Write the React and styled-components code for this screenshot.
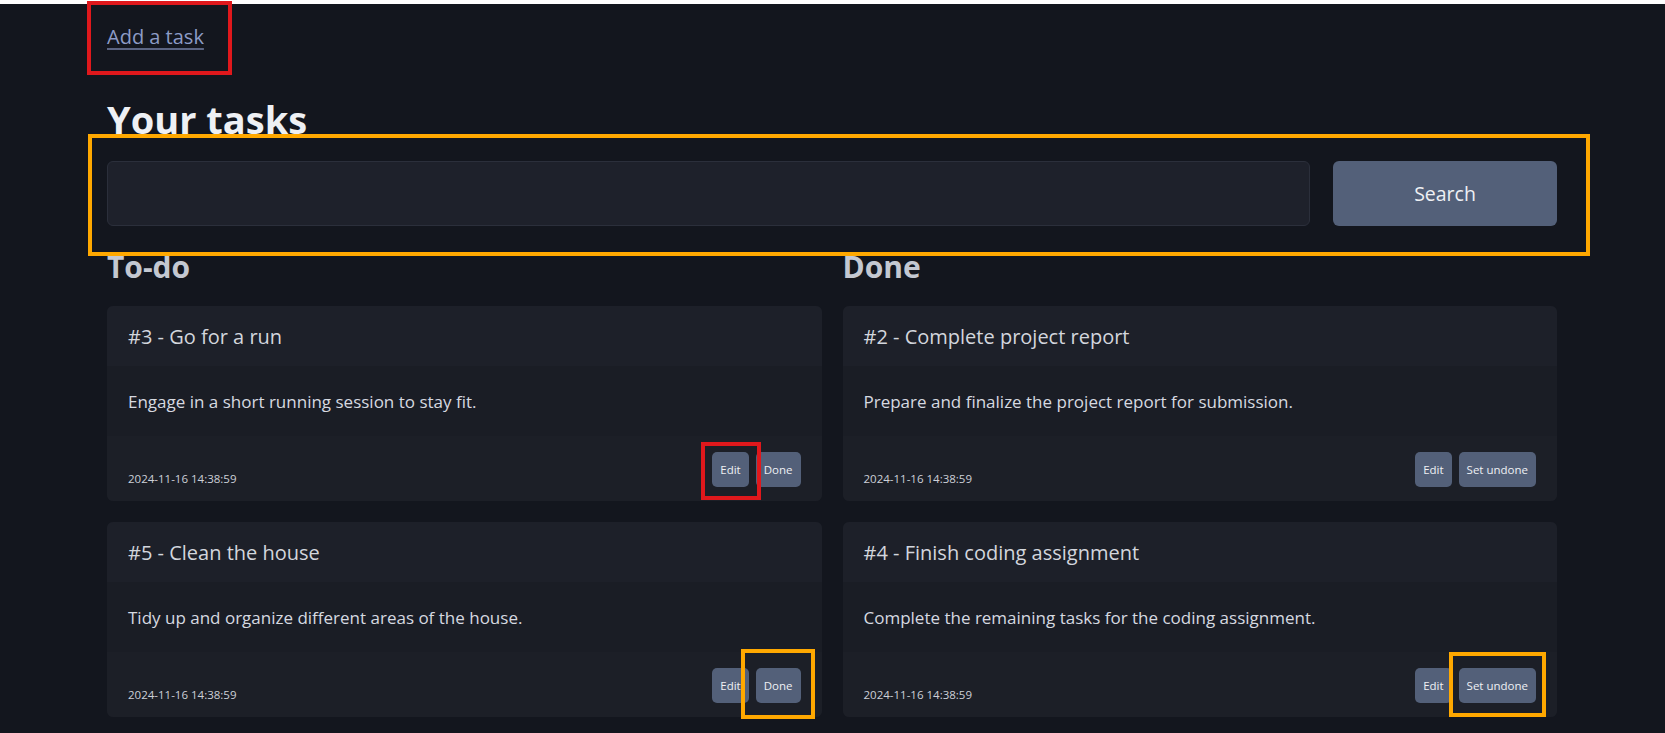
import React, { useState } from 'react';
import styled, { createGlobalStyle } from 'styled-components';

const GlobalStyle = createGlobalStyle`
    html, body {
        margin: 0;
        padding: 0;
        background-color: #13161e;
    }
    body {
        font-family: 'Open Sans', 'Noto Sans', sans-serif;
        color: #d3d6dd;
    }
`;

const Page = styled.div`
    position: relative;
    min-height: 729px;
    border-top: 4px solid #ffffff;
    padding: 0 108px 0 107px;
`;

// annotation rectangles drawn over the screenshot
const Marker = styled.div`
    position: absolute;
    top: ${(props) => props.top}px;
    left: ${(props) => props.left}px;
    width: ${(props) => props.width}px;
    height: ${(props) => props.height}px;
    border: 4px solid ${(props) => props.color};
    box-sizing: border-box;
    pointer-events: none;
`;

const AddLink = styled.a`
    display: inline-block;
    margin-top: 20px;
    font-size: 20px;
    line-height: 26px;
    color: #8d9cc6;
    text-decoration: underline;
    text-decoration-color: #5b6482;
    text-underline-offset: 4px;
    cursor: pointer;
`;

const Title = styled.h1`
    margin: 46px 0 0;
    font-size: 38px;
    line-height: 46px;
    font-weight: 700;
    color: #eef0f4;
`;

const SearchRow = styled.form`
    display: flex;
    gap: 23px;
    margin-top: 19px;
`;

const SearchInput = styled.input`
    flex: 1;
    height: 65px;
    box-sizing: border-box;
    background-color: #1e212b;
    border: 1px solid #2b2f3b;
    border-radius: 6px;
    color: #e0e3ea;
    font-family: inherit;
    font-size: 18px;
    padding: 0 16px;
    outline: none;
`;

const SearchButton = styled.button`
    width: 224px;
    height: 65px;
    border: none;
    border-radius: 6px;
    background-color: #536079;
    color: #eef0f4;
    font-family: inherit;
    font-size: 19.5px;
    cursor: pointer;
`;

const Columns = styled.div`
    display: grid;
    grid-template-columns: 1fr 1fr;
    column-gap: 21px;
    margin-top: 23px;
`;

const Column = styled.section`
    display: flex;
    flex-direction: column;
    gap: 21px;
`;

const ColumnTitle = styled.h2`
    margin: 0;
    font-size: 30px;
    line-height: 36px;
    font-weight: 700;
    color: #c4c8d1;
`;

const Card = styled.div`
    display: flex;
    flex-direction: column;
    background-color: #1a1d25;
    border-radius: 6px;
    overflow: hidden;
`;

const CardHeader = styled.div`
    height: 60px;
    display: flex;
    align-items: center;
    padding: 0 21px;
    background-color: #1d2029;
    font-size: 20px;
    color: #d3d6dd;
`;

const CardBody = styled.div`
    height: 70px;
    display: flex;
    align-items: center;
    padding: 0 21px;
    font-size: 17px;
    color: #d6d9e0;
`;

const CardFooter = styled.div`
    height: 65px;
    box-sizing: border-box;
    display: flex;
    justify-content: space-between;
    align-items: flex-end;
    padding: 0 21px 14px;
    background-color: #1c1f27;
`;

const Stamp = styled.span`
    font-size: 11.5px;
    line-height: 16px;
    color: #cdd0d8;
`;

const Actions = styled.div`
    display: flex;
    gap: 7px;
`;

const SmallButton = styled.button`
    height: 35px;
    padding: 0 8px;
    border: none;
    border-radius: 5px;
    background-color: #536079;
    color: #eef0f4;
    font-family: inherit;
    font-size: 11.5px;
    cursor: pointer;
`;

const TaskCard = ({ task }) => (
    <Card>
        <CardHeader>
            #{task.id} - {task.title}
        </CardHeader>
        <CardBody>{task.description}</CardBody>
        <CardFooter>
            <Stamp>{task.created}</Stamp>
            <Actions>
                <SmallButton>Edit</SmallButton>
                <SmallButton>{task.done ? 'Set undone' : 'Done'}</SmallButton>
            </Actions>
        </CardFooter>
    </Card>
);

const App = () => {
    const [query, setQuery] = useState('');
    const tasks = [
        { id: 3, title: 'Go for a run', description: 'Engage in a short running session to stay fit.', created: '2024-11-16 14:38:59', done: false },
        { id: 5, title: 'Clean the house', description: 'Tidy up and organize different areas of the house.', created: '2024-11-16 14:38:59', done: false },
        { id: 2, title: 'Complete project report', description: 'Prepare and finalize the project report for submission.', created: '2024-11-16 14:38:59', done: true },
        { id: 4, title: 'Finish coding assignment', description: 'Complete the remaining tasks for the coding assignment.', created: '2024-11-16 14:38:59', done: true },
    ];

    return (
        <Page>
            <GlobalStyle />
            <AddLink>Add a task</AddLink>
            <Title>Your tasks</Title>
            <SearchRow onSubmit={(e) => e.preventDefault()}>
                <SearchInput value={query} onChange={(e) => setQuery(e.target.value)} />
                <SearchButton type='submit'>Search</SearchButton>
            </SearchRow>
            <Columns>
                <Column>
                    <ColumnTitle>To-do</ColumnTitle>
                    {tasks.filter((t) => !t.done).map((t) => (
                        <TaskCard key={t.id} task={t} />
                    ))}
                </Column>
                <Column>
                    <ColumnTitle>Done</ColumnTitle>
                    {tasks.filter((t) => t.done).map((t) => (
                        <TaskCard key={t.id} task={t} />
                    ))}
                </Column>
            </Columns>

            <Marker color='#e0181c' top={-3} left={87} width={145} height={74} />
            <Marker color='#ffa800' top={130} left={88} width={1502} height={122} />
            <Marker color='#e0181c' top={438} left={701} width={60} height={58} />
            <Marker color='#ffa800' top={645} left={741} width={74} height={70} />
            <Marker color='#ffa800' top={648} left={1449} width={97} height={65} />
        </Page>
    );
};

export default App;
